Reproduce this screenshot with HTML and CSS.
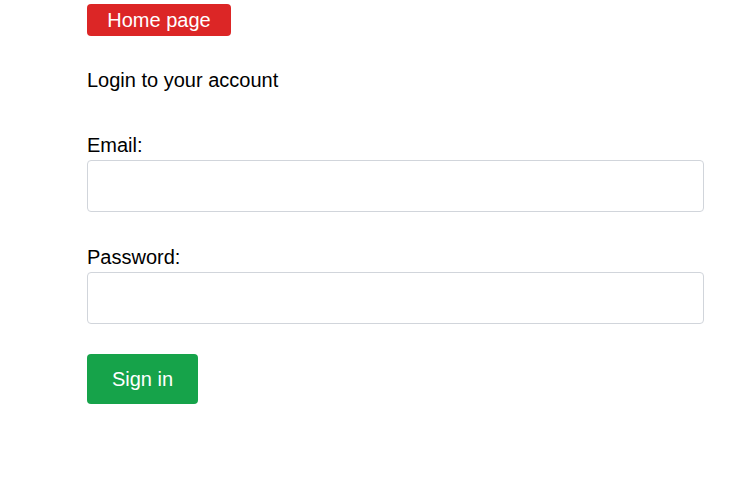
FILE: index.html
```html
<!DOCTYPE html>
<html lang="en">
<head>
<meta charset="utf-8">
<title>Login</title>
<link rel="stylesheet" href="styles.css">
</head>
<body>
<div class="page">
  <a class="home-btn" href="#">Home page</a>
  <h1 class="title">Login to your account</h1>
  <form class="form">
    <div class="field">
      <label class="label" for="email">Email:</label>
      <input class="input" id="email" type="email">
    </div>
    <div class="field">
      <label class="label" for="password">Password:</label>
      <input class="input" id="password" type="password">
    </div>
    <button class="submit" type="button">Sign in</button>
  </form>
</div>
</body>
</html>
```
FILE: styles.css
```css
* { box-sizing: border-box; }
html, body { margin: 0; padding: 0; background: #ffffff; }
body {
  font-family: "Liberation Sans", Arial, sans-serif;
  font-size: 20px;
  color: #000000;
}
.page {
  width: 617px;
  margin-left: 87px;
  padding-top: 4px;
  display: flex;
  flex-direction: column;
  align-items: flex-start;
}
.home-btn {
  display: inline-flex;
  align-items: center;
  justify-content: center;
  width: 144px;
  height: 32px;
  background: #dc2626;
  color: #ffffff;
  text-decoration: none;
  border-radius: 4px;
  font-size: 20px;
}
.title {
  font-size: 20px;
  font-weight: normal;
  margin: 33px 0 0;
  line-height: normal;
}
.form {
  width: 100%;
  display: flex;
  flex-direction: column;
  align-items: flex-start;
  margin-top: 42px;
}
.field {
  width: 100%;
  display: flex;
  flex-direction: column;
}
.field + .field { margin-top: 34px; }
.label {
  line-height: normal;
  margin-bottom: 3px;
}
.input {
  width: 100%;
  height: 52px;
  border: 1px solid #d1d5db;
  border-radius: 4px;
  background: #ffffff;
  font-size: 18px;
  padding: 0 12px;
  outline: none;
}
.submit {
  margin-top: 30px;
  width: 111px;
  height: 50px;
  border: none;
  border-radius: 4px;
  background: #16a34a;
  color: #ffffff;
  font-family: "Liberation Sans", Arial, sans-serif;
  font-size: 20px;
  cursor: pointer;
}
```
